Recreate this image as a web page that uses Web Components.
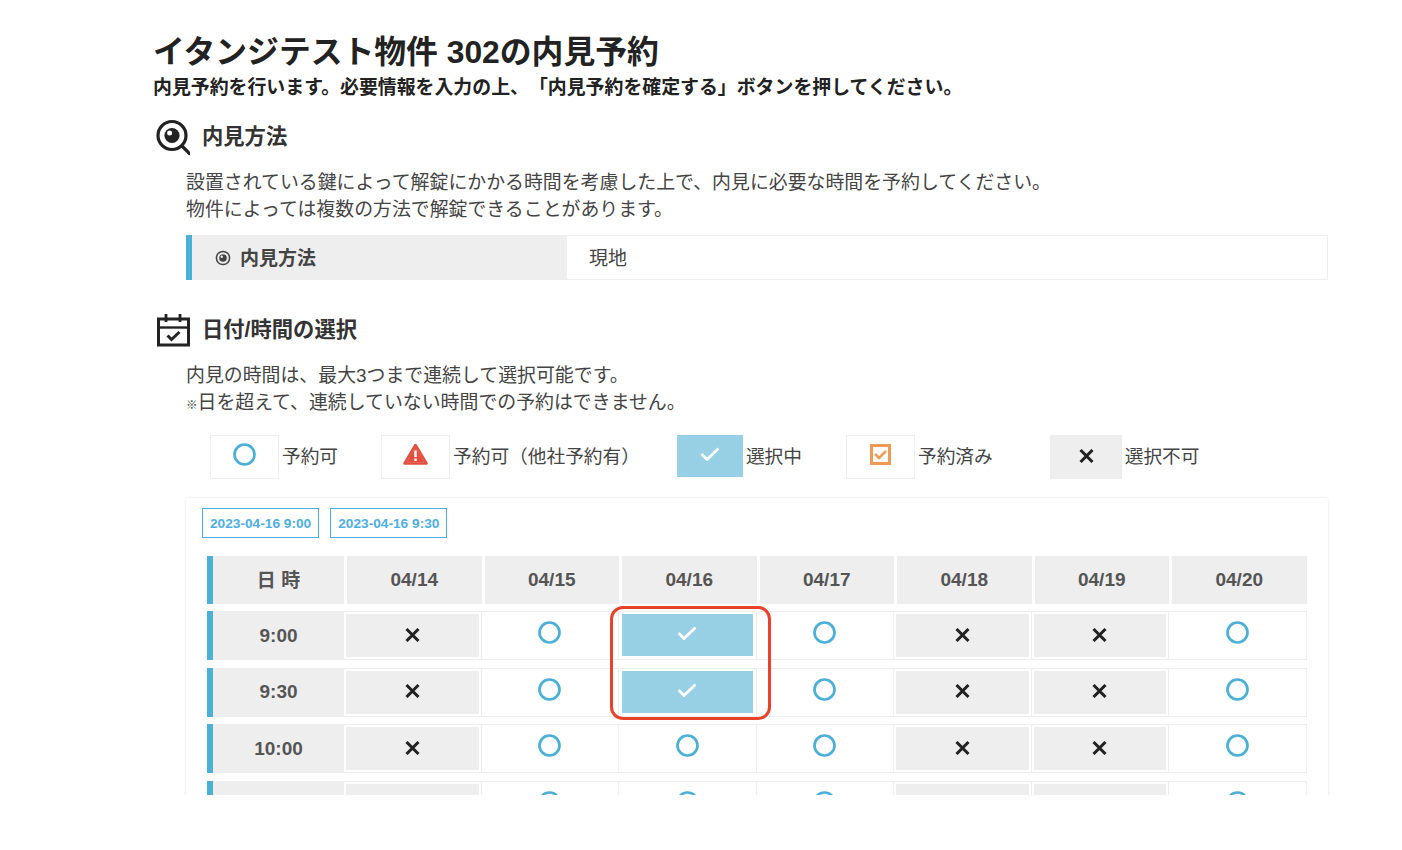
<!DOCTYPE html>
<html lang="ja">
<head>
<meta charset="utf-8">
<style>
  html, body { margin: 0; background: #fff; }
  body { font-family: "Liberation Sans", "Noto Sans CJK JP", sans-serif; text-spacing-trim: space-all; }
</style>
</head>
<body>
<reserve-page>
  <section-head>
    <svg slot="icon" width="36" height="40" viewBox="0 0 36 40"><circle cx="18" cy="18.500" r="14" fill="none" stroke="#222" stroke-width="3.200"/><circle cx="18" cy="18.500" r="7.600" fill="#222"/><circle cx="15.600" cy="16" r="2.500" fill="#fff"/><path d="M28 29 35.500 36.500" stroke="#222" stroke-width="3.200" stroke-linecap="round"/></svg>
    内見方法
  </section-head>
  <body-text>設置されている鍵によって解錠にかかる時間を考慮した上で、内見に必要な時間を予約してください。<br>物件によっては複数の方法で解錠できることがあります。</body-text>
  <method-row label="内見方法" value="現地"></method-row>
  <section-head second>
    <svg slot="icon" width="36" height="40" viewBox="0 0 36 40"><rect x="4.500" y="9" width="30" height="26" fill="none" stroke="#222" stroke-width="3"/><path d="M4.500 17.500h30" stroke="#222" stroke-width="2.400"/><path d="M12 4v8M26 4v8" stroke="#222" stroke-width="2.800"/><path d="M13.500 25.500l4 4 8-7.500" fill="none" stroke="#222" stroke-width="3"/></svg>
    日付/時間の選択
  </section-head>
  <body-text>内見の時間は、最大3つまで連続して選択可能です。<br><small style="font-size:11.500px;font-weight:700">※</small>日を超えて、連続していない時間での予約はできません。</body-text>
  <legend-bar></legend-bar>
  <schedule-card></schedule-card>
</reserve-page>

<script>
const ICONS = {
  open: `<svg width="23" height="23" viewBox="0 0 23 23"><circle cx="11.500" cy="11.500" r="10" fill="none" stroke="#4bafd6" stroke-width="2.700"/></svg>`,
  warn: `<svg width="25" height="22" viewBox="0 0 25 22"><path d="M12.500 2 23.500 20.500H1.500Z" fill="#fff" stroke="#e4503f" stroke-width="2.600" stroke-linejoin="round"/><path d="M12.500 4 21.500 19.500H3.500Z" fill="#e4503f"/><path d="M11.300 7.500h2.400v6.500h-2.400z M11.300 15.500h2.400v2.400h-2.400z" fill="#fff"/></svg>`,
  check: `<svg width="20" height="14" viewBox="0 0 20 14"><path d="M1.500 7 7 12.500 18.500 1.500" fill="none" stroke="#fff" stroke-width="2.800"/></svg>`,
  done: `<svg width="21" height="21" viewBox="0 0 21 21"><rect x="1.500" y="1.500" width="18" height="18" fill="#fff" stroke="#f09a55" stroke-width="3"/><path d="M5 10l4 4 7-7" fill="none" stroke="#f09a55" stroke-width="2.600"/></svg>`,
  cross: `<svg width="15" height="14" viewBox="0 0 15 14"><path d="M1.500 1 13.500 13M13.500 1 1.500 13" fill="none" stroke="#222" stroke-width="3"/></svg>`
};

class ReservePage extends HTMLElement {
  constructor() {
    super();
    this.attachShadow({ mode: "open" }).innerHTML = `
      <style>
        :host { display: block; height: 795px; overflow: hidden; padding-left: 154px; padding-top: 34px; box-sizing: border-box; color: #222; }
        h1 { margin: 0 0 0 -1px; font-size: 31.800px; line-height: 36px; font-weight: 700; color: #222; }
        p { margin: 5px 0 0 -1px; font-size: 18.900px; line-height: 26px; font-weight: 700; color: #222; }
      </style>
      <h1>イタンジテスト物件 302の内見予約</h1>
      <p>内見予約を行います。必要情報を入力の上、「内見予約を確定する」ボタンを押してください。</p>
      <slot></slot>`;
  }
}

class SectionHead extends HTMLElement {
  constructor() {
    super();
    this.attachShadow({ mode: "open" }).innerHTML = `
      <style>
        :host { display: flex; align-items: center; gap: 12px; height: 40px; margin-top: 16px; font-size: 21.300px; font-weight: 700; color: #333; }
        :host([second]) { margin-top: 30px; }
        .txt { position: relative; top: -3px; }
      </style>
      <slot name="icon"></slot><span class="txt"><slot></slot></span>`;
  }
}

class BodyText extends HTMLElement {
  constructor() {
    super();
    this.attachShadow({ mode: "open" }).innerHTML = `
      <style>
        :host { display: block; margin: 13px 0 0 32px; font-size: 18.900px; line-height: 26.500px; color: #444; }
      </style>
      <slot></slot>`;
  }
}

class MethodRow extends HTMLElement {
  constructor() {
    super();
    this.attachShadow({ mode: "open" }).innerHTML = `
      <style>
        :host { display: flex; width: 1142px; height: 45px; margin: 12px 0 0 32px; font-size: 19px; color: #444; }
        .label { display: flex; align-items: center; gap: 9px; width: 381px; padding-left: 23px; box-sizing: border-box; background: #eee; border-left: 6px solid #4bafd6; font-weight: 700; }
        .label span, .value span { position: relative; top: -1px; }
        .value { flex: 1; display: flex; align-items: center; padding-left: 22px; border: 1px solid #eee; border-left: 0; }
      </style>
      <div class="label">
        <svg width="16" height="16" viewBox="0 0 16 16"><circle cx="8" cy="8" r="6.600" fill="none" stroke="#444" stroke-width="1.500"/><circle cx="8" cy="8" r="3.800" fill="#444"/><circle cx="6.800" cy="6.800" r="1.200" fill="#eee"/></svg>
        <span>${this.getAttribute("label")}</span>
      </div>
      <div class="value"><span>${this.getAttribute("value")}</span></div>`;
  }
}

class LegendBar extends HTMLElement {
  constructor() {
    super();
    const items = [
      ["open", "予約可", 69, "", 0],
      ["warn", "予約可（他社予約有）", 69, "", 43],
      ["check", "選択中", 66, "sel", 37],
      ["done", "予約済み", 69, "", 44],
      ["cross", "選択不可", 72, "off", 57]
    ];
    this.attachShadow({ mode: "open" }).innerHTML = `
      <style>
        :host { display: flex; height: 44px; margin: 17px 0 0 56px; font-size: 18.700px; color: #444; }
        .item { display: flex; align-items: center; gap: 3px; }
        .item span { position: relative; top: -3px; }
        .box { display: flex; align-items: center; justify-content: center; box-sizing: border-box; height: 44px; border: 1px solid #eee; }
        .box svg { position: relative; top: -3px; }
        .sel { background: #97cfe5; border-color: #97cfe5; height: 42px; align-self: flex-start; }
        .sel svg { top: -2px; }
        .off { background: #eee; }
        .off svg { top: -1px; left: 1px; }
      </style>
      ${items.map(([icon, text, w, cls, ml]) => `
        <div class="item" style="margin-left:${ml}px">
          <div class="box ${cls}" style="width:${w}px">${ICONS[icon]}</div><span>${text}</span>
        </div>`).join("")}`;
  }
}

class ScheduleCard extends HTMLElement {
  constructor() {
    super();
    const days = ["04/14", "04/15", "04/16", "04/17", "04/18", "04/19", "04/20"];
    const rows = [
      ["9:00", "xosoxxo"],
      ["9:30", "xosoxxo"],
      ["10:00", "xoooxxo"],
      ["", "xoooxxo"] // cut off by the page edge, label never shows
    ];
    const cell = c => {
      if (c === "x") return `<div class="cell"><div class="inner off">${ICONS.cross}</div></div>`;
      if (c === "s") return `<div class="cell"><div class="inner sel">${ICONS.check}</div></div>`;
      return `<div class="cell"><div class="inner">${ICONS.open}</div></div>`;
    };
    this.attachShadow({ mode: "open" }).innerHTML = `
      <style>
        :host { display: block; position: relative; width: 1142px; height: 320px; margin: 19px 0 0 32px; box-sizing: border-box; padding: 10px 0 0 16px; background: #fff; border-radius: 2px; box-shadow: 0 0 3px rgba(0,0,0,.12); }
        .tags { display: flex; gap: 11px; height: 30px; }
        .tag { display: flex; align-items: center; padding: 1px 7px 0; border: 1.500px solid #4eaee3; font-size: 13.700px; font-weight: 700; color: #4eaee3; }
        .grid { display: grid; grid-template-columns: 137px repeat(7, 137.500px); width: 1099.500px; margin: 18px 0 0 5px; }
        .head { height: 48px; margin-bottom: 7px; display: flex; align-items: center; justify-content: center; font-size: 19px; font-weight: 700; color: #555; background: #eee; background-clip: padding-box; border-left: 3px solid #fff; }
        .time { height: 49px; margin-bottom: 7.700px; display: flex; align-items: center; justify-content: center; font-size: 19px; font-weight: 700; color: #555; background: #eee; border-left: 6px solid #4bafd6; box-sizing: border-box; }
        .head.first { border-left: 6px solid #4bafd6; padding-bottom: 3px; box-sizing: border-box; }
        .cell { height: 49px; margin-bottom: 7.700px; box-sizing: border-box; border: 1px solid #eee; border-left: 0; padding: 2px; }
        .inner { display: flex; align-items: center; justify-content: center; height: 100%; }
        .inner svg { position: relative; top: -3px; }
        .off { background: #eee; }
        .off svg { top: -1px; }
        .sel { background: #97cfe5; margin: 0 1px; height: 42px; }
        .sel svg { top: -2px; }
        .mark { position: absolute; left: 424px; top: 108px; width: 161px; height: 114px; box-sizing: border-box; border: 3px solid #e8432a; border-radius: 13px; }
      </style>
      <div class="tags"><div class="tag">2023-04-16 9:00</div><div class="tag">2023-04-16 9:30</div></div>
      <div class="grid">
        <div class="head first">日 時</div>
        ${days.map(d => `<div class="head">${d}</div>`).join("")}
        ${rows.map(([t, r]) => `<div class="time">${t}</div>${[...r].map(cell).join("")}`).join("")}
      </div>
      <div class="mark"></div>`;
  }
}

customElements.define("reserve-page", ReservePage);
customElements.define("section-head", SectionHead);
customElements.define("body-text", BodyText);
customElements.define("method-row", MethodRow);
customElements.define("legend-bar", LegendBar);
customElements.define("schedule-card", ScheduleCard);
</script>
</body>
</html>
